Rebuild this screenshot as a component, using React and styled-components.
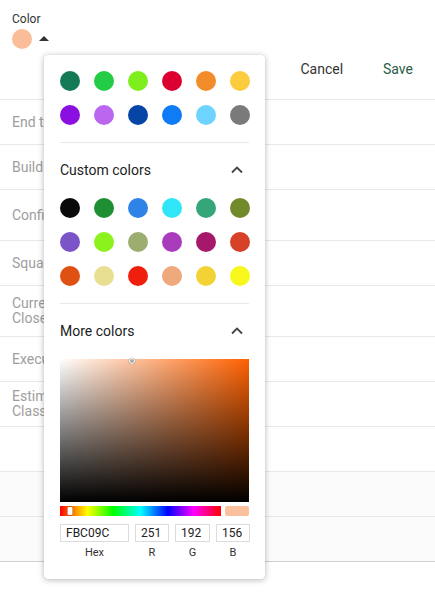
import React from "react";
import styled, { createGlobalStyle } from "styled-components";

const Global = createGlobalStyle`
  html, body { margin: 0; padding: 0; background: #fff; }
  body { font-family: Roboto, "Liberation Sans", Arial, sans-serif; color: #333; }
  * { box-sizing: border-box; }
`;

const Page = styled.div`
  position: relative;
  width: 435px;
  height: 595px;
  overflow: hidden;
  background: #fff;
`;

const Header = styled.div`
  height: 100px;
  display: flex;
  justify-content: space-between;
  align-items: flex-start;
  border-bottom: 1px solid #e8e8e8;
`;

const Field = styled.div`
  display: flex;
  flex-direction: column;
  padding: 12px 0 0 12px;
`;

const FieldLabel = styled.div`
  font-size: 12px;
  line-height: 14px;
  color: #333;
`;

const SwatchRow = styled.div`
  display: flex;
  align-items: center;
  gap: 7px;
  margin-top: 3px;
`;

const Swatch = styled.div`
  width: 20px;
  height: 20px;
  border-radius: 50%;
  background: #fbbc98;
`;

const Caret = styled.div`
  width: 0;
  height: 0;
  border-left: 5px solid transparent;
  border-right: 5px solid transparent;
  border-bottom: 5px solid #333;
  margin-top: -1px;
`;

const Actions = styled.div`
  display: flex;
  gap: 40px;
  padding: 61px 22px 0 0;
`;

const ActionButton = styled.button`
  border: none;
  background: none;
  padding: 0;
  font-family: inherit;
  font-size: 14px;
  line-height: 16px;
  color: ${(p) => (p.$primary ? "#2a5c45" : "#333")};
  cursor: pointer;
`;

const Row = styled.div`
  height: ${(p) => p.$h}px;
  display: flex;
  align-items: center;
  padding-left: 12px;
  border-bottom: 1px solid ${(p) => (p.$strong ? "#cfcfcf" : "#e8e8e8")};
  background: ${(p) => (p.$muted ? "#fbfbfb" : "#fff")};
  font-size: 14px;
  line-height: 15px;
  color: #9e9e9e;
  white-space: pre-line;
`;

const Popup = styled.div`
  position: absolute;
  left: 44px;
  top: 55px;
  width: 221px;
  height: 524px;
  background: #fff;
  border-radius: 4px;
  box-shadow: 0 1px 6px rgba(0, 0, 0, 0.28), 0 0 1px rgba(0, 0, 0, 0.15);
  padding: 16px 16px 0;
  display: flex;
  flex-direction: column;
`;

const Grid = styled.div`
  display: grid;
  grid-template-columns: repeat(6, 20px);
  column-gap: 14px;
  row-gap: 14px;
`;

const Dot = styled.div`
  width: 20px;
  height: 20px;
  border-radius: 50%;
  background: ${(p) => p.$c};
`;

const Divider = styled.div`
  height: 1px;
  background: #e8e8e8;
  margin-top: 17px;
`;

const SectionHead = styled.div`
  height: 55px;
  display: flex;
  align-items: center;
  justify-content: space-between;
  font-size: 14px;
  color: #222;
  padding-bottom: 1px;
`;

const Chevron = styled.svg`
  width: 14px;
  height: 14px;
  margin-right: 5px;
`;

const Saturation = styled.div`
  position: relative;
  height: 143px;
  background: linear-gradient(to top, #000, rgba(0, 0, 0, 0)),
    linear-gradient(to right, #fff, ${(p) => p.$hue});
`;

const SatHandle = styled.div`
  position: absolute;
  width: 6px;
  height: 6px;
  border-radius: 50%;
  border: 1px solid #fff;
  background: #aaa;
  box-shadow: 0 0 1px rgba(0, 0, 0, 0.5);
  transform: translate(-50%, -50%);
`;

const HueRow = styled.div`
  display: flex;
  gap: 4px;
  margin-top: 4px;
  height: 10px;
`;

const HueBar = styled.div`
  position: relative;
  flex: 1;
  background: linear-gradient(
    to right,
    #f00 0%,
    #ff0 17%,
    #0f0 33%,
    #0ff 50%,
    #00f 67%,
    #f0f 83%,
    #f00 100%
  );
`;

const HueHandle = styled.div`
  position: absolute;
  top: 1px;
  width: 5px;
  height: 8px;
  background: #fff;
  border-radius: 1px;
  box-shadow: 0 0 1px rgba(0, 0, 0, 0.6);
  transform: translateX(-50%);
`;

const Preview = styled.div`
  width: 24px;
  border-radius: 2px;
  background: ${(p) => p.$c};
`;

const Inputs = styled.div`
  display: grid;
  grid-template-columns: 69px 34px 35px 34px;
  column-gap: 6px;
  margin-top: 8px;
`;

const InputCol = styled.div`
  display: flex;
  flex-direction: column;
  align-items: center;
`;

const Input = styled.input`
  width: 100%;
  height: 18px;
  border: 1px solid #dcdcdc;
  border-radius: 0;
  padding: 0 0 0 5px;
  font-family: inherit;
  font-size: 12px;
  color: #222;
  outline: none;
`;

const InputLabel = styled.div`
  font-size: 11px;
  line-height: 13px;
  margin-top: 4px;
  color: #333;
`;

const presets = [
  "#137a55", "#22cc44", "#7fee1d", "#dc0030", "#f28c28", "#fdcb3e",
  "#8b0fe0", "#bb66ee", "#0645a6", "#0f7bf5", "#6fd3ff", "#7a7a7a",
];

const customs = [
  "#0a0a0a", "#1f8f33", "#2f82e6", "#2ee6f8", "#35a57a", "#718a2a",
  "#7b55c8", "#8cf21e", "#9cad70", "#a93cbc", "#a6186a", "#d74128",
  "#de5113", "#e8df90", "#f01f0d", "#f0a97c", "#f3d236", "#f8f71c",
];

const rows = [
  { t: "End time", h: 45 },
  { t: "Build type", h: 45 },
  { t: "Configuration", h: 51 },
  { t: "Square footage", h: 45 },
  { t: "Current\nClosed", h: 51 },
  { t: "Execution", h: 45 },
  { t: "Estimated\nClass", h: 45 },
  { t: "", h: 45 },
  { t: "", h: 45, muted: true },
  { t: "", h: 45, muted: true, strong: true },
];

const Up = () => (
  <Chevron viewBox="0 0 14 14">
    <path d="M2 9.5 L7 4.5 L12 9.5" fill="none" stroke="#444" strokeWidth="1.8" />
  </Chevron>
);

export default function App() {
  const hex = "FBC09C";
  const rgb = [251, 192, 156];
  return (
    <Page>
      <Global />
      <Header>
        <Field>
          <FieldLabel>Color</FieldLabel>
          <SwatchRow>
            <Swatch />
            <Caret />
          </SwatchRow>
        </Field>
        <Actions>
          <ActionButton>Cancel</ActionButton>
          <ActionButton $primary>Save</ActionButton>
        </Actions>
      </Header>
      {rows.map((r, i) => (
        <Row key={i} $h={r.h} $muted={r.muted} $strong={r.strong}>
          {r.t}
        </Row>
      ))}
      <Popup>
        <Grid>
          {presets.map((c) => (
            <Dot key={c} $c={c} />
          ))}
        </Grid>
        <Divider />
        <SectionHead>
          Custom colors
          <Up />
        </SectionHead>
        <Grid>
          {customs.map((c) => (
            <Dot key={c} $c={c} />
          ))}
        </Grid>
        <Divider />
        <SectionHead>
          More colors
          <Up />
        </SectionHead>
        <Saturation $hue="#ff6100">
          <SatHandle style={{ left: "38%", top: "2px" }} />
        </Saturation>
        <HueRow>
          <HueBar>
            <HueHandle style={{ left: "6.3%" }} />
          </HueBar>
          <Preview $c={`#${hex}`} />
        </HueRow>
        <Inputs>
          <InputCol>
            <Input defaultValue={hex} />
            <InputLabel>Hex</InputLabel>
          </InputCol>
          {["R", "G", "B"].map((l, i) => (
            <InputCol key={l}>
              <Input defaultValue={rgb[i]} />
              <InputLabel>{l}</InputLabel>
            </InputCol>
          ))}
        </Inputs>
      </Popup>
    </Page>
  );
}
